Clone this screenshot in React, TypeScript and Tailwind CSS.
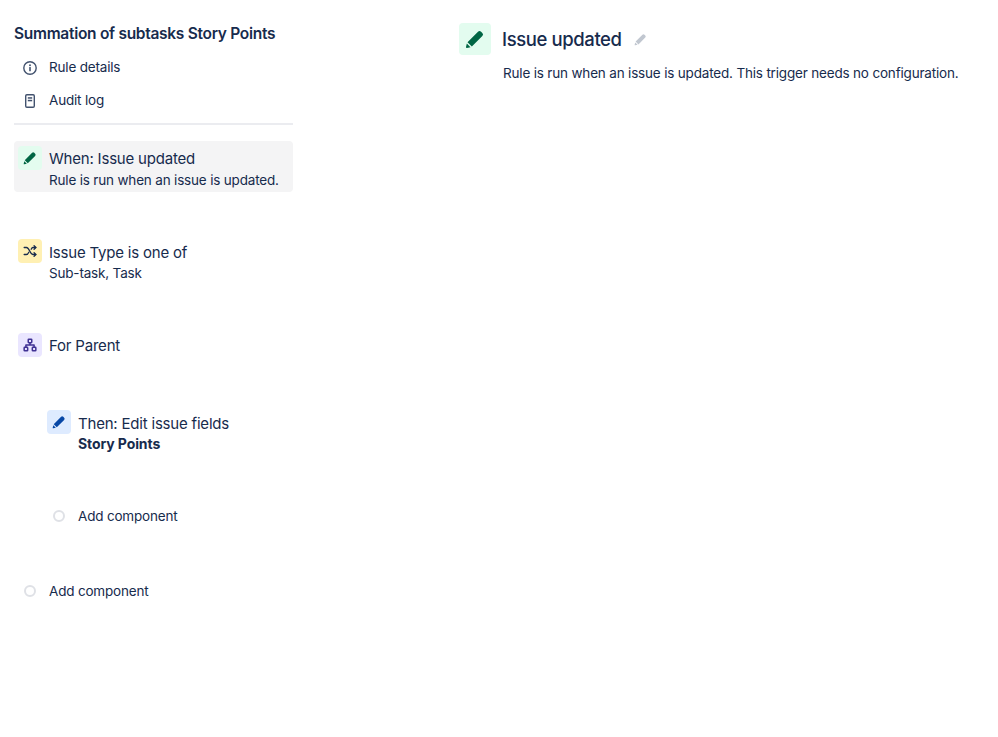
import React from 'react';

const Pencil: React.FC<{ size: number; color: string }> = ({ size, color }) => (
  <svg width={size} height={size} viewBox="0 0 24 24" fill={color}>
    <path d="M15.6 3.2a2.6 2.6 0 0 1 3.7 0l1.5 1.5a2.6 2.6 0 0 1 0 3.7L8.2 21 3 15.8 15.6 3.2z" />
    <path d="M2.2 17.4l4.4 4.4-4.3 1c-.7.2-1.3-.4-1.1-1.1l1-4.3z" />
  </svg>
);

const Shuffle = () => (
  <svg width="14" height="14" viewBox="0 0 24 24" fill="none" stroke="#172b4d" strokeWidth="2.2" strokeLinecap="round" strokeLinejoin="round">
    <path d="M2 6h4c5 0 6 12 11 12h5" />
    <path d="M2 18h4c2 0 3-2 4-4M14 9c1-2 2-3 3-3h5" />
    <path d="M19 3l3 3-3 3M19 15l3 3-3 3" />
  </svg>
);

const Tree = () => (
  <svg width="14" height="14" viewBox="0 0 24 24" fill="none" stroke="#403294" strokeWidth="2.6" strokeLinejoin="round">
    <rect x="9" y="2" width="6" height="6" rx="1" />
    <rect x="2" y="16" width="6" height="6" rx="1" />
    <rect x="16" y="16" width="6" height="6" rx="1" />
    <path d="M12 8v4M5 16v-4h14v4" />
  </svg>
);

const Info = () => (
  <svg width="16" height="16" viewBox="0 0 16 16" fill="none">
    <circle cx="8" cy="8" r="6.2" stroke="#42526e" strokeWidth="1.4" />
    <rect x="7.2" y="7" width="1.6" height="4.2" rx=".5" fill="#42526e" />
    <circle cx="8" cy="5.2" r=".95" fill="#42526e" />
  </svg>
);

const Page = () => (
  <svg width="16" height="16" viewBox="0 0 16 16" fill="none">
    <rect x="3.7" y="1.7" width="8.6" height="12.6" rx="1.2" stroke="#42526e" strokeWidth="1.4" />
    <rect x="5.8" y="4.2" width="4.4" height="1.5" fill="#42526e" />
    <rect x="5.8" y="6.8" width="4.4" height="1.5" fill="#42526e" />
  </svg>
);

const Ring = () => <span className="block h-3 w-3 rounded-full border-2 border-[#dfe1e6] bg-white" />;

const App: React.FC = () => {
  return (
    <div className="flex min-h-[737px] bg-white text-[#172b4d] font-['Inter','Liberation_Sans',sans-serif]">
      <div className="ml-[14px] w-[279px] shrink-0 pt-[24px]">
        <h2 className="text-[15.5px] font-semibold leading-5 tracking-[-0.285px]">Summation of subtasks Story Points</h2>

        <div className="mt-[7px]">
          <div className="flex h-[33px] items-center gap-[11px] pl-[8px] text-[13.5px] tracking-[-0.18px]">
            <Info />
            <span>Rule details</span>
          </div>
          <div className="flex h-[33px] items-center gap-[11px] pl-[8px] text-[13.5px] tracking-[-0.18px]">
            <Page />
            <span>Audit log</span>
          </div>
        </div>

        <div className="mt-[6px] h-[2px] bg-[#ebecf0]" />

        <div className="mt-[16px] flex h-[51px] gap-[7px] rounded bg-[#f4f4f5] pl-[4px] pt-[5px]">
          <div className="flex h-6 w-6 items-center justify-center rounded bg-[#e3fcef]">
            <Pencil size={14} color="#006644" />
          </div>
          <div>
            <div className="text-[15px] leading-6 mt-px tracking-[-0.2px]">When: Issue updated</div>
            <div className="text-[13.5px] leading-[18px] tracking-[-0.18px]">Rule is run when an issue is updated.</div>
          </div>
        </div>

        <div className="mt-[47px] flex gap-[7px] pl-[4px]">
          <div className="flex h-6 w-6 items-center justify-center rounded bg-[#fff0b3]">
            <Shuffle />
          </div>
          <div>
            <div className="text-[15px] leading-6 mt-[2px] tracking-[-0.2px]">Issue Type is one of</div>
            <div className="text-[13.5px] leading-[18px] mt-[-1px] tracking-[-0.18px]">Sub-task, Task</div>
          </div>
        </div>

        <div className="mt-[51px] flex items-start gap-[7px] pl-[4px]">
          <div className="flex h-6 w-6 items-center justify-center rounded bg-[#eae6ff]">
            <Tree />
          </div>
          <div className="text-[15px] leading-6 mt-px tracking-[-0.2px]">For Parent</div>
        </div>

        <div className="mt-[52px] flex gap-[7px] pl-[33px]">
          <div className="flex h-6 w-6 items-center justify-center rounded bg-[#deebff]">
            <Pencil size={14} color="#0747a6" />
          </div>
          <div>
            <div className="text-[15px] leading-6 mt-[2px] tracking-[-0.2px]">Then: Edit issue fields</div>
            <div className="text-sm leading-[18px] mt-[-1px] font-bold tracking-[-0.1px]">Story Points</div>
          </div>
        </div>

        <div className="mt-[51px] flex h-6 items-center gap-[13px] pl-[39px] text-[13.5px] tracking-[-0.18px]">
          <Ring />
          <span>Add component</span>
        </div>

        <div className="mt-[51px] flex h-6 items-center gap-[13px] pl-[10px] text-[13.5px] tracking-[-0.18px]">
          <Ring />
          <span>Add component</span>
        </div>
      </div>

      <div className="ml-[166px] pt-[23px]">
        <div className="flex items-center">
          <div className="flex h-8 w-8 items-center justify-center rounded bg-[#e3fcef]">
            <Pencil size={20} color="#006644" />
          </div>
          <h1 className="ml-[11px] text-[18.5px] font-medium leading-8 tracking-[-0.4px]">Issue updated</h1>
          <span className="ml-[12px] mt-px">
            <Pencil size={13} color="#c1c7d0" />
          </span>
        </div>
        <p className="ml-[44px] mt-[8px] text-[13.5px] leading-5 tracking-[-0.18px]">
          Rule is run when an issue is updated. This trigger needs no configuration.
        </p>
      </div>
    </div>
  );
};

export default App;
